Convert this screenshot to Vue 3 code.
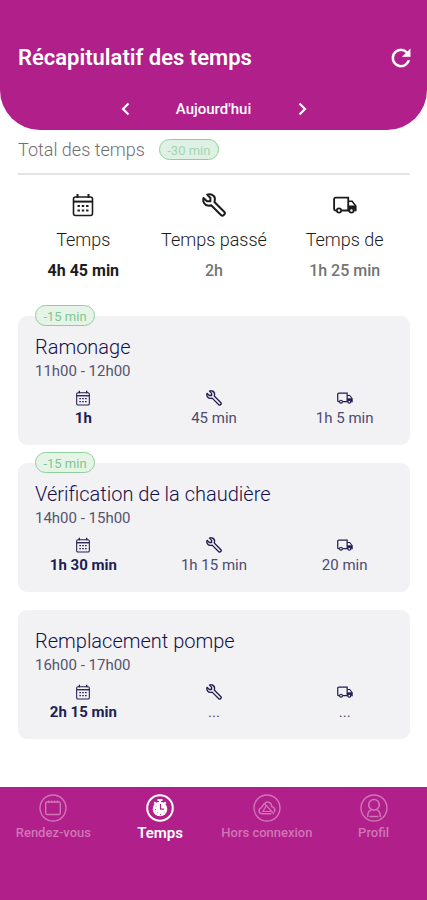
<script setup>
const summary = [
  { icon: 'calendar', label: 'Temps', value: '4h 45 min', strong: true },
  { icon: 'wrench', label: 'Temps passé', value: '2h' },
  { icon: 'truck', label: 'Temps de', value: '1h 25 min' },
]

const icons = ['calendar', 'wrench', 'truck']

const jobs = [
  { title: 'Ramonage', hours: '11h00 - 12h00', delta: '-15 min', times: ['1h', '45 min', '1h 5 min'] },
  { title: 'Vérification de la chaudière', hours: '14h00 - 15h00', delta: '-15 min', times: ['1h 30 min', '1h 15 min', '20 min'] },
  { title: 'Remplacement pompe', hours: '16h00 - 17h00', delta: '', times: ['2h 15 min', '...', '...'] },
]

const tabs = [
  { icon: 'tab-calendar', label: 'Rendez-vous' },
  { icon: 'tab-clock', label: 'Temps', active: true },
  { icon: 'tab-offline', label: 'Hors connexion' },
  { icon: 'tab-profile', label: 'Profil' },
]
</script>

<template>
  <div class="screen">
    <svg class="sprite" aria-hidden="true">
      <symbol id="calendar" viewBox="0 0 24 24">
        <rect x="2.5" y="4" width="19" height="18.5" rx="2" fill="none" stroke="currentColor" stroke-width="1.6" />
        <path d="M2.5 8.6h19" stroke="currentColor" stroke-width="2" />
        <path d="M6.5 1v4M17.5 1v4" stroke="currentColor" stroke-width="2" />
        <path d="M6.5 13h2.4M10.8 13h2.4M15.1 13h2.4M6.5 17.5h2.4M10.8 17.5h2.4M15.1 17.5h2.4" stroke="currentColor" stroke-width="2" />
      </symbol>
      <symbol id="wrench" viewBox="0 0 24 24">
        <path d="M5.2 1.6 8.4 5v3.2H5L1.500 5C.5 8.600 2.400 12 6 12.600c1.200.2 2.200 0 3.200-.4l10 10c.7.7 1.600.7 2.300 0l.9-.9c.7-.7.7-1.600 0-2.300l-10-10C13.500 5.500 12.300 2.500 9.200 1.500 7.900 1 6.400 1.100 5.200 1.600Z" fill="none" stroke="currentColor" stroke-width="2" stroke-linejoin="round" />
      </symbol>
      <symbol id="truck" viewBox="0 0 26 20">
        <path d="M4 16H2.800A1.600 1.600 0 0 1 1.200 14.400V3.600A1.600 1.600 0 0 1 2.800 2H16.500V16H9" fill="none" stroke="currentColor" stroke-width="2" />
        <path d="M16.500 6h4.200l4 5.200V16h-2M16.500 16h1" fill="none" stroke="currentColor" stroke-width="1.700" />
        <path d="M16.500 10.500h8V15h-8Z" fill="currentColor" />
        <circle cx="6.500" cy="16" r="2.300" fill="#fff" stroke="currentColor" stroke-width="1.900" />
        <circle cx="20" cy="16" r="2.300" fill="#fff" stroke="currentColor" stroke-width="1.900" />
      </symbol>
      <symbol id="refresh" viewBox="0 0 24 24">
        <path d="M17.650 6.350A7.958 7.958 0 0 0 12 4a8 8 0 1 0 7.730 10h-2.080A6 6 0 1 1 12 6c1.660 0 3.140.69 4.220 1.780L13 11h7V4l-2.350 2.350Z" fill="currentColor" stroke="currentColor" stroke-width=".2" />
      </symbol>
      <symbol id="chevron-left" viewBox="0 0 14 14">
        <path d="M9.500 1.500 4 7l5.500 5.500" fill="none" stroke="currentColor" stroke-width="2.200" />
      </symbol>
      <symbol id="chevron-right" viewBox="0 0 14 14">
        <path d="M4.500 1.500 10 7l-5.500 5.500" fill="none" stroke="currentColor" stroke-width="2.200" />
      </symbol>
      <symbol id="tab-calendar" viewBox="0 0 28 28">
        <circle cx="14" cy="14" r="13" fill="none" stroke="currentColor" stroke-width="1.400" />
        <rect x="6.700" y="8" width="14.600" height="12.500" rx="1.500" fill="none" stroke="currentColor" stroke-width="1.400" />
        <path d="M9.500 6.500v2.500M12.500 6.500v2.500M15.500 6.500v2.500M18.500 6.500v2.500" stroke="currentColor" stroke-width="1.200" />
      </symbol>
      <symbol id="tab-clock" viewBox="0 0 28 28">
        <circle cx="14" cy="14" r="12.800" fill="none" stroke="currentColor" stroke-width="2" />
        <circle cx="14" cy="15" r="7.300" fill="currentColor" />
        <path d="M11.500 5h5v2h-1.500v1.500h-2V7h-1.500ZM7.500 9l1.500-1.500 1.600 1.600-1.500 1.500ZM20.500 9 19 7.500l-1.600 1.600 1.500 1.500Z" fill="currentColor" />
        <path d="M14.500 10v5.200h3.500" fill="none" stroke="#b01f8a" stroke-width="1.200" />
        <path d="M10 12v.8M9 15.500h1M11 19l.6-.6M14.500 20v1M18 18.500l.6.6" stroke="#b01f8a" stroke-width=".8" />
      </symbol>
      <symbol id="tab-offline" viewBox="0 0 28 28">
        <circle cx="14" cy="14" r="13" fill="none" stroke="currentColor" stroke-width="1.400" />
        <path d="M11.500 9.500c3-3 7-1 7.200 3 3 .6 3.800 3.500 2.500 5.500M18.500 19.800H9.500c-4 0-4.600-5-1.200-6.200L11.500 9.500" fill="none" stroke="currentColor" stroke-width="1.500" />
        <path d="m11.500 9.500 9.500 10.500M13 12l-3 5.500h8" fill="none" stroke="currentColor" stroke-width="1.200" />
      </symbol>
      <symbol id="tab-profile" viewBox="0 0 28 28">
        <circle cx="14" cy="14" r="13" fill="none" stroke="currentColor" stroke-width="1.400" />
        <circle cx="14" cy="10.800" r="5.300" fill="none" stroke="currentColor" stroke-width="1.600" />
        <path d="M7.800 23v-1.500c0-3 1.500-5 3.700-5.800M20.200 23v-1.500c0-3-1.500-5-3.700-5.800M9.500 22.500h9" fill="none" stroke="currentColor" stroke-width="1.500" />
      </symbol>
    </svg>

    <header class="header">
      <div class="title-row">
        <h1>Récapitulatif des temps</h1>
        <button type="button" class="icon-button" aria-label="Actualiser">
          <svg class="refresh"><use href="#refresh" /></svg>
        </button>
      </div>
      <div class="day-row">
        <button type="button" class="icon-button" aria-label="Jour précédent">
          <svg class="chevron"><use href="#chevron-left" /></svg>
        </button>
        <span class="day">Aujourd'hui</span>
        <button type="button" class="icon-button" aria-label="Jour suivant">
          <svg class="chevron"><use href="#chevron-right" /></svg>
        </button>
      </div>
    </header>

    <main class="content">
      <div class="total">
        <h2>Total des temps</h2>
        <span class="pill faded">-30 min</span>
      </div>

      <section class="columns summary">
        <div v-for="item in summary" :key="item.label" class="cell">
          <svg class="icon-large"><use :href="'#' + item.icon" /></svg>
          <span class="label">{{ item.label }}</span>
          <span class="total-value" :class="{ strong: item.strong }">{{ item.value }}</span>
        </div>
      </section>

      <article v-for="job in jobs" :key="job.title" class="card">
        <span v-if="job.delta" class="pill overlap">{{ job.delta }}</span>
        <h3>{{ job.title }}</h3>
        <p class="hours">{{ job.hours }}</p>
        <div class="columns">
          <div v-for="(time, i) in job.times" :key="i" class="cell">
            <svg class="icon-small"><use :href="'#' + icons[i]" /></svg>
            <span class="value" :class="{ strong: i === 0 }">{{ time }}</span>
          </div>
        </div>
      </article>
    </main>

    <nav class="tabs">
      <a v-for="tab in tabs" :key="tab.label" href="#" class="tab" :class="{ active: tab.active }">
        <svg class="tab-icon"><use :href="'#' + tab.icon" /></svg>
        <span>{{ tab.label }}</span>
      </a>
    </nav>
  </div>
</template>

<style>
body {
  margin: 0;
  background: #fff;
}
</style>

<style scoped>
.screen {
  display: flex;
  flex-direction: column;
  min-height: 100vh;
  font-family: Roboto, "Liberation Sans", sans-serif;
  color: #211d52;
}

.sprite {
  position: absolute;
  width: 0;
  height: 0;
}

h1,
h2,
h3,
p {
  margin: 0;
}

.header {
  display: flex;
  flex-direction: column;
  gap: 24px;
  padding: 43px 12px 9px 18px;
  border-radius: 0 0 40px 40px;
  background: #b01f8a;
  color: #fff;
}

.title-row {
  display: flex;
  align-items: center;
  justify-content: space-between;
}

h1 {
  font-size: 22px;
  line-height: 30px;
  font-weight: 600;
}

.icon-button {
  display: flex;
  padding: 0;
  border: 0;
  background: none;
  color: inherit;
}

.refresh {
  width: 28px;
  height: 28px;
}

.day-row {
  display: flex;
  align-items: center;
  justify-content: center;
  height: 24px;
  padding-right: 6px;
}

.day {
  width: 162px;
  text-align: center;
  font-size: 15px;
  line-height: 20px;
  font-weight: 500;
}

.chevron {
  width: 14px;
  height: 14px;
}

.content {
  flex: 1;
  padding: 0 17px 48px 18px;
}

.total {
  display: flex;
  align-items: center;
  gap: 14px;
  height: 43px;
  border-bottom: 2px solid #e3e3e5;
}

.total > * {
  margin-bottom: 4px;
}

h2 {
  font-size: 18px;
  line-height: 24px;
  font-weight: 300;
  color: #707070;
}

.pill {
  box-sizing: border-box;
  width: 60px;
  height: 21px;
  border: 1px solid #8fcf9c;
  border-radius: 11px;
  background: #e6f4e8;
  color: #7fc68e;
  font-size: 13px;
  line-height: 21px;
  text-align: center;
}

.faded {
  background: #dff1e4;
  color: #a4d4b0;
}

.columns {
  display: grid;
  grid-template-columns: repeat(3, 1fr);
}

.cell {
  display: flex;
  flex-direction: column;
  align-items: center;
}

.summary {
  padding: 18px 0 34px;
  color: #1c1c1c;
}

.icon-large {
  width: 24px;
  height: 24px;
  margin-bottom: 11px;
}

.label {
  font-size: 18px;
  line-height: 24px;
  font-weight: 300;
  color: #1c1c1c;
}

.total-value {
  margin-top: 8px;
  font-size: 16px;
  line-height: 22px;
  font-weight: 500;
  color: #747474;
}

.total-value.strong {
  font-weight: 700;
  color: #1c1c1c;
}

.card {
  position: relative;
  padding: 18px 0 17px;
  border-radius: 9px;
  background: #f2f2f5;
}

.card + .card {
  margin-top: 18px;
}

.overlap {
  position: absolute;
  top: -11px;
  left: 17px;
}

h3 {
  padding-left: 17px;
  font-size: 20px;
  line-height: 26px;
  font-weight: 300;
  color: #15104a;
}

.hours {
  padding-left: 17px;
  font-size: 15px;
  line-height: 22px;
  color: #55536f;
}

.icon-small {
  width: 16px;
  height: 16px;
  margin: 8px 0 2px;
}

.value {
  font-size: 15px;
  line-height: 20px;
  color: #4d4a70;
}

.value.strong {
  font-weight: 700;
  color: #211d52;
}

.tabs {
  display: grid;
  grid-template-columns: repeat(4, 1fr);
  box-sizing: border-box;
  min-height: 113px;
  padding-top: 7px;
  background: #b01f8a;
}

.tab {
  display: flex;
  flex-direction: column;
  align-items: center;
  gap: 1px;
  color: #d075b7;
  font-size: 13px;
  line-height: 20px;
  font-weight: 500;
  text-decoration: none;
  white-space: nowrap;
}

.tab-icon {
  width: 28px;
  height: 28px;
}

.tab.active {
  color: #fff;
  font-size: 15px;
  font-weight: 600;
}
</style>
